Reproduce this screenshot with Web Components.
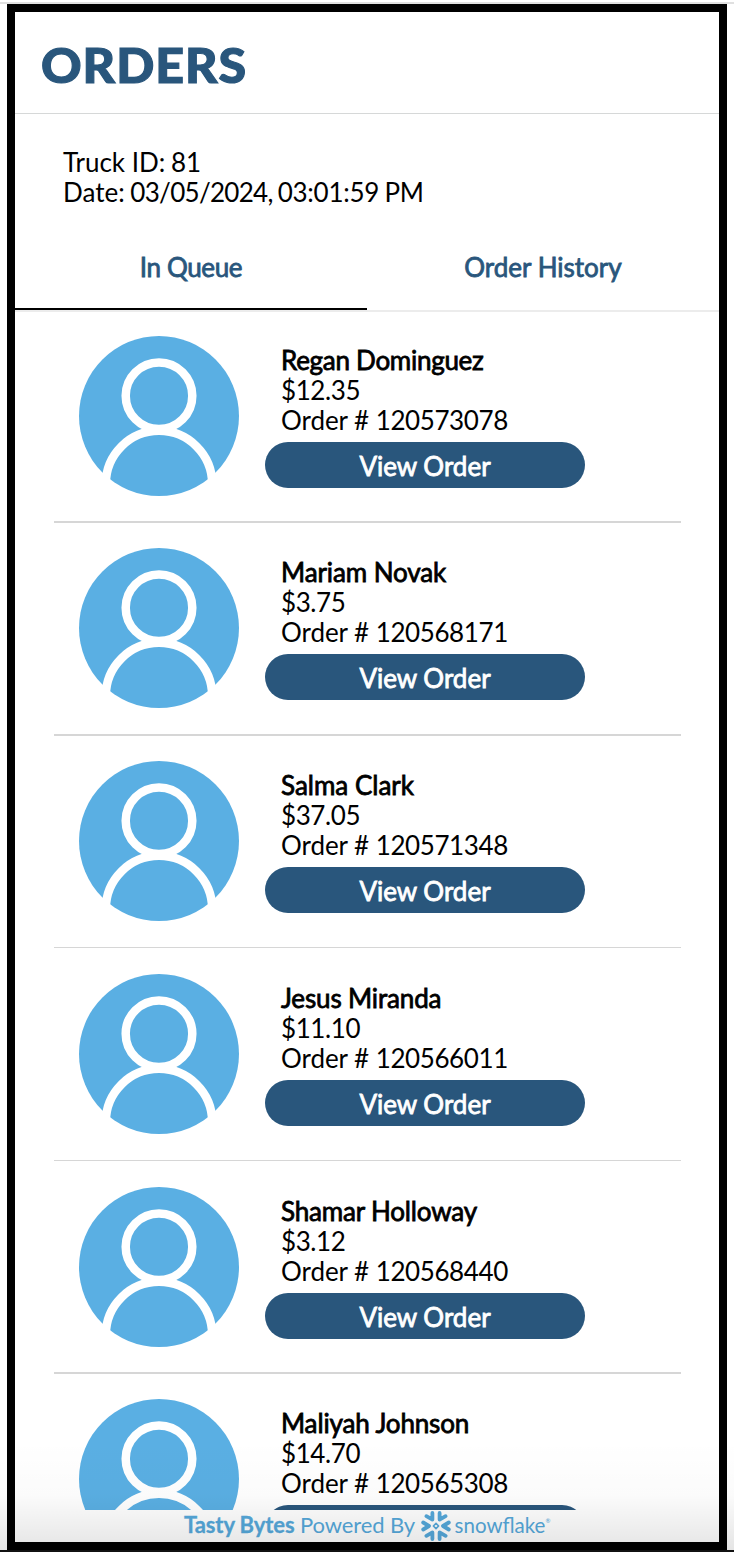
<!DOCTYPE html>
<html lang="en">
<head>
<meta charset="utf-8">
<title>Orders</title>
<style>
html,body{margin:0;height:100%}
body{background:#fff;font-family:Lato,"Liberation Sans",sans-serif;overflow:hidden}
</style>
</head>
<body>
<orders-app></orders-app>
<script>
const define = (name, html) => {
  const t = document.createElement('template');
  t.innerHTML = html;
  customElements.define(name, class extends HTMLElement {
    constructor() {
      super();
      this.attachShadow({mode: 'open'}).append(t.content.cloneNode(true));
    }
  });
};

define('page-title', `<style>
:host{display:flex;align-items:center;box-sizing:border-box;height:102px;padding:5px 0 0 26px;border-bottom:1px solid #d6d8d8}
h1{margin:0;font-size:48px;line-height:58px;font-weight:900;color:#29567c;letter-spacing:.9px;-webkit-text-stroke:1.1px #29567c;transform:scaleX(1.045);transform-origin:0 0}
</style><h1><slot></slot></h1>`);

define('truck-info', `<style>
:host{display:block;box-sizing:border-box;height:110px;padding:33px 48px 0;font-size:26px;line-height:30px;color:#000}
</style><slot></slot>`);

define('tab-item', `<style>
:host{display:block;flex:1;box-sizing:border-box;height:86px;padding-top:28px;text-align:center;font-size:26px;line-height:30px;color:#29567c;-webkit-text-stroke:.8px #29567c;border-bottom:2px solid transparent}
:host([active]){border-color:#000;letter-spacing:-.35px}
</style><slot></slot>`);

define('tab-bar', `<style>
:host{display:flex;border-bottom:2px solid #ececec;margin-bottom:-1px}
</style><slot></slot>`);

define('user-avatar', `<style>
:host{display:block;width:160px;height:160px}
svg{display:block}
</style><svg width="160" height="160" viewBox="0 0 160 160">
<circle cx="80" cy="80" r="80" fill="#5aafe3"/>
<g fill="none" stroke="#fff" stroke-width="8.5">
<circle cx="80" cy="59.7" r="33.3"/>
<circle cx="80" cy="148" r="53.2"/>
</g>
</svg>`);

define('pill-button', `<style>
:host{display:block;width:320px}
button{display:block;width:100%;height:46px;border:0;border-radius:23px;padding:2px 0 0;background:#29567c;color:#fff;font:400 26px/30px Lato,sans-serif;-webkit-text-stroke:.8px #fff}
</style><button><slot></slot></button>`);

define('order-row', `<style>
:host{display:flex;flex-direction:column;margin:0 38px 0 39px}
.row{display:flex;padding:25px 0 0 25px;gap:26px;flex:1}
.text{padding:9px 0 7px 16px;font-size:26px;line-height:30px;color:#000;letter-spacing:-.4px}
.name{-webkit-text-stroke:.8px #000;letter-spacing:var(--name-spacing,0)}
.label{letter-spacing:-.05px}
hr{width:100%;height:2px;margin:0;border:0;background:#d6d6d6}
:host([thin]) hr{height:1px;margin-bottom:1px}
:host([clipped]) pill-button span{visibility:hidden}
</style><div class="row"><user-avatar></user-avatar><div><div class="text"><div class="name"><slot name="name"></slot></div><slot name="price"></slot><br><span class="label">Order # </span><slot name="number"></slot></div><pill-button><span>View Order</span></pill-button></div></div><hr>`);

define('order-list', `<style>
:host{display:grid;grid-template-rows:212px 213px 213px 213px 212px 212px;height:1199px;overflow:hidden}
</style><slot></slot>`);

define('snowflake-logo', `<style>
:host{display:flex;align-items:center;color:#55a8da}
svg{display:block}
span{font-size:20.5px;line-height:24px;margin:-1px 0 0 4px}
sup{font-size:6px;line-height:6px;margin-top:-10px}
</style><svg width="30" height="30" viewBox="0 0 30 30" fill="none" stroke="currentColor" stroke-width="3.8" stroke-linecap="round" stroke-linejoin="round">
<path d="M11.4 2V8.6L5.4 5.2M18.6 2V8.6L24.6 5.2"/>
<path d="M11.4 28V21.4L5.4 24.8M18.6 28V21.4L24.6 24.8M2.2 11.5L8 15L2.2 18.5M27.8 11.5L22 15L27.8 18.5"/>
<path d="M15 12.4L17.6 15L15 17.6L12.4 15Z" stroke-width="1.6"/>
</svg><span>snowflake</span><sup>®</sup>`);

define('powered-footer', `<style>
:host{display:flex;box-sizing:border-box;height:31px;padding-left:169px;font-size:22px;line-height:30px;color:#55a8da;white-space:pre}
b{font-weight:700;-webkit-text-stroke:.3px #55a8da}
div{letter-spacing:-.1px}
snowflake-logo{margin-left:5.5px}
</style><div><b>Tasty Bytes</b> Powered By</div><snowflake-logo></snowflake-logo>`);

define('orders-app', `<style>
:host{display:block;position:relative;height:1552px;box-sizing:border-box;padding-top:2px}
.top{height:2px;background:#e0e0e0}
.frame{margin:0 7px;border:8px solid #000;height:1530px}
.base{height:2px;background:#111}
.shade{position:absolute;left:0;right:0;bottom:2px;height:110px;background:linear-gradient(rgba(0,0,0,0),rgba(0,0,0,.015) 50%,rgba(0,0,0,.1));pointer-events:none}
.date{letter-spacing:-.7px}
.time{letter-spacing:-.27px;margin-left:-1.6px}
.half{margin-left:-1px}
</style><div class="top"></div>
<div class="frame">
<page-title>ORDERS</page-title>
<truck-info>Truck ID: <span class="half">81</span><br>Date: <span class="half date">03/05/2024,</span> <span class="time">03:01:59 <span class="half">PM</span></span></truck-info>
<tab-bar><tab-item active>In Queue</tab-item><tab-item>Order History</tab-item></tab-bar>
<order-list></order-list>
<powered-footer></powered-footer>
</div><div class="base"></div><div class="shade"></div>`);

const orders = [
  ['Regan Dominguez', '$12.35', '120573078', -.28],
  ['Mariam Novak', '$3.75', '120568171', -.1],
  ['Salma Clark', '$37.05', '120571348', 0, 'thin'],
  ['Jesus Miranda', '$11.10', '120566011', -.15, 'thin'],
  ['Shamar Holloway', '$3.12', '120568440', -.17],
  ['Maliyah Johnson', '$14.70', '120565308', -.14, 'clipped']
];
const list = document.querySelector('orders-app').shadowRoot.querySelector('order-list');
for (const [name, price, number, spacing, flag] of orders) {
  const row = document.createElement('order-row');
  if (flag) row.setAttribute(flag, '');
  row.style.setProperty('--name-spacing', spacing + 'px');
  for (const [slot, text] of [['name', name], ['price', price], ['number', number]]) {
    const s = document.createElement('span');
    s.slot = slot;
    s.textContent = text;
    row.append(s);
  }
  list.append(row);
}
</script>
</body>
</html>
